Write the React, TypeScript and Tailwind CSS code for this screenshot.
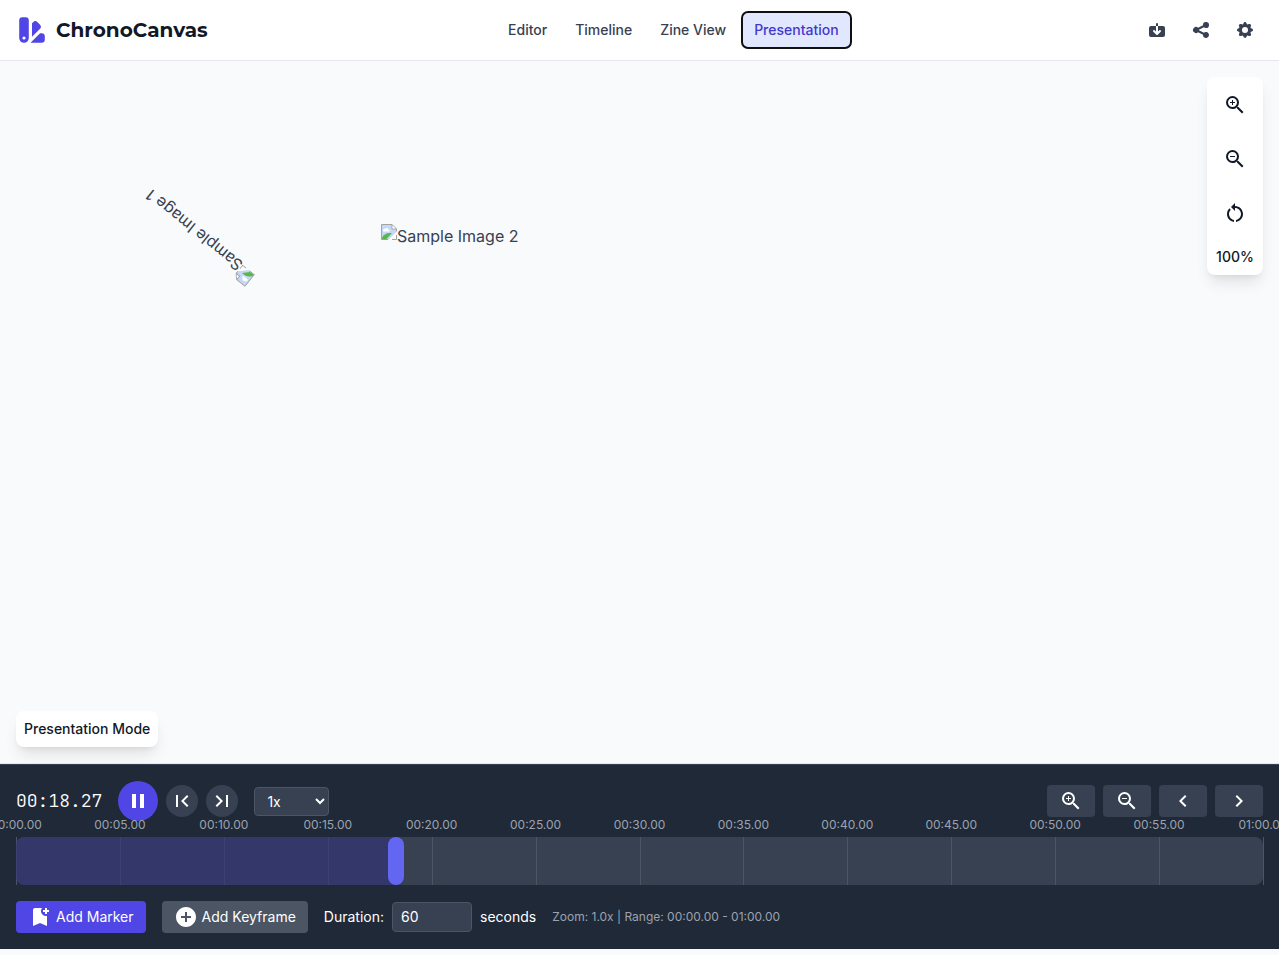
import { useId } from "react";
import type { ReactNode } from "react";
import { HiColorSwatch, HiSave, HiShare, HiCog } from "react-icons/hi";
import {
  MdAddCircle,
  MdBookmarkAdd,
  MdChevronLeft,
  MdChevronRight,
  MdFirstPage,
  MdLastPage,
  MdPause,
  MdRestartAlt,
  MdZoomIn,
  MdZoomOut,
} from "react-icons/md";

const DURATION = 60;
const CURRENT = 18.27;
const TICK_STEP = 5;

function formatTime(seconds: number) {
  const minutes = Math.floor(seconds / 60);
  const rest = (seconds % 60).toFixed(2).padStart(5, "0");
  return `${String(minutes).padStart(2, "0")}:${rest}`;
}

function NavButton({ children, active = false }: { children: ReactNode; active?: boolean }) {
  const state = active
    ? "bg-[#e0e7ff] text-[#4338ca] outline-2 -outline-offset-1 outline-[#101010]"
    : "text-[#374151]";
  return <button className={`rounded-md px-3 py-2 text-sm font-medium ${state}`}>{children}</button>;
}

function HeaderAction({ label, children }: { label: string; children: ReactNode }) {
  return (
    <button aria-label={label} className="rounded-md p-2 text-[#374151]">
      {children}
    </button>
  );
}

function PanelButton({ label, children }: { label: string; children: ReactNode }) {
  return (
    <button aria-label={label} className="rounded p-2">
      {children}
    </button>
  );
}

function StepButton({ label, children }: { label: string; children: ReactNode }) {
  return (
    <button aria-label={label} className="flex size-8 items-center justify-center rounded-full bg-[#374151]">
      {children}
    </button>
  );
}

function RangeButton({ label, children }: { label: string; children: ReactNode }) {
  return (
    <button aria-label={label} className="rounded bg-[#374151] px-3 py-1">
      {children}
    </button>
  );
}

function MissingImage({ alt }: { alt: string }) {
  return (
    <div className="flex whitespace-nowrap text-base text-[#374151]">
      <svg width="16" height="16" viewBox="0 0 16 16" aria-hidden="true">
        <path d="M.5.5h10.500l4.500 4.500V8L8 15.500H.5z" fill="#c6d7f8" />
        <path d="M2 6.500a1.600 1.600 0 0 1 1.800-1.600 2 2 0 0 1 3.700.6 1 1 0 0 1 .2 2H2.500z" fill="#fff" />
        <path d="M1 15v-1.500c2-3.500 5-5 10-4.500l-5.500 6z" fill="#5bb64a" />
        <path d="M16 7.500V10L10 16H7.500z" fill="#fff" />
        <path d="M7 15.500H.5V.5H11l4.500 4.500v2.500M11 .5V5h4.500M11 15.500h4.500V11" fill="none" stroke="#a3a3a3" />
        <path d="M11.500 1.500v3h3z" fill="#fff" />
      </svg>
      <span>{alt}</span>
    </div>
  );
}

function Header() {
  return (
    <header className="flex items-center justify-between border-b border-[#e5e7eb] bg-white px-4 py-3">
      <div className="flex items-center gap-2">
        <HiColorSwatch size={32} className="text-[#4f46e5]" />
        <h1 className="font-['Montserrat','Inter',sans-serif] text-xl font-bold text-[#111827]">ChronoCanvas</h1>
      </div>
      <nav className="flex gap-1">
        <NavButton>Editor</NavButton>
        <NavButton>Timeline</NavButton>
        <NavButton>Zine View</NavButton>
        <NavButton active>Presentation</NavButton>
      </nav>
      <div className="flex gap-2">
        <HeaderAction label="Save">
          <HiSave size={20} />
        </HeaderAction>
        <HeaderAction label="Share">
          <HiShare size={20} />
        </HeaderAction>
        <HeaderAction label="Settings">
          <HiCog size={20} />
        </HeaderAction>
      </div>
    </header>
  );
}

function Canvas() {
  return (
    <main className="relative flex-1 border-b border-[#e5e7eb]">
      <div className="absolute top-[226px] left-[245px] origin-top-left rotate-[219deg]">
        <MissingImage alt="Sample Image 1" />
      </div>
      <div className="absolute top-[163px] left-[381px]">
        <MissingImage alt="Sample Image 2" />
      </div>
      <div className="absolute top-4 right-4 flex flex-col items-center gap-3.5 rounded-lg bg-white p-2 shadow-lg">
        <PanelButton label="Zoom in">
          <MdZoomIn size={24} />
        </PanelButton>
        <PanelButton label="Zoom out">
          <MdZoomOut size={24} />
        </PanelButton>
        <PanelButton label="Reset zoom">
          <MdRestartAlt size={24} />
        </PanelButton>
        <span className="text-sm font-medium">100%</span>
      </div>
      <div className="absolute bottom-4 left-4 rounded-lg bg-white p-2 text-sm font-medium shadow-lg">
        Presentation Mode
      </div>
    </main>
  );
}

function Track() {
  const ticks = Array.from({ length: DURATION / TICK_STEP + 1 }, (_, i) => i * TICK_STEP);
  const progress = `${(CURRENT / DURATION) * 100}%`;
  return (
    <div className="relative mt-4 h-12 rounded-lg bg-[#374151]">
      {ticks.map((t) => (
        <div
          key={t}
          className="absolute top-0 h-full w-px bg-[#4b5563]"
          style={{ left: `${(t / DURATION) * 100}%` }}
        >
          <span className="absolute -top-5 left-0 -translate-x-1/2 text-xs text-[#9ca3af]">{formatTime(t)}</span>
        </div>
      ))}
      <div className="absolute top-0 left-0 h-full rounded-l-lg bg-[#312e81]/50" style={{ width: progress }} />
      <div className="absolute top-0 h-full w-4 -translate-x-1/2 rounded-full bg-[#6366f1]" style={{ left: progress }} />
    </div>
  );
}

function Timeline() {
  const durationId = useId();
  return (
    <footer className="border-t border-[#374151] bg-[#1f2937] p-4 text-white">
      <div className="flex items-center justify-between">
        <div className="flex items-center gap-4">
          <span className="font-['JetBrains_Mono','Liberation_Mono',monospace] text-lg font-light">
            {formatTime(CURRENT)}
          </span>
          <div className="flex items-center gap-2">
            <button
              aria-label="Pause"
              className="flex size-10 items-center justify-center rounded-full bg-[#4f46e5]"
            >
              <MdPause size={24} />
            </button>
            <StepButton label="Go to start">
              <MdFirstPage size={24} />
            </StepButton>
            <StepButton label="Go to end">
              <MdLastPage size={24} />
            </StepButton>
          </div>
          <select
            aria-label="Playback speed"
            defaultValue="1x"
            className="w-[75px] rounded border border-[#4b5563] bg-[#374151] px-2 py-1 text-sm"
          >
            <option>0.25x</option>
            <option>0.5x</option>
            <option>1x</option>
            <option>1.5x</option>
            <option>2x</option>
          </select>
        </div>
        <div className="flex gap-2">
          <RangeButton label="Zoom timeline in">
            <MdZoomIn size={24} />
          </RangeButton>
          <RangeButton label="Zoom timeline out">
            <MdZoomOut size={24} />
          </RangeButton>
          <RangeButton label="Scroll left">
            <MdChevronLeft size={24} />
          </RangeButton>
          <RangeButton label="Scroll right">
            <MdChevronRight size={24} />
          </RangeButton>
        </div>
      </div>
      <Track />
      <div className="mt-4 flex items-center gap-4 text-sm">
        <button className="flex items-center gap-1 rounded bg-[#4f46e5] px-3 py-1">
          <MdBookmarkAdd size={24} />
          Add Marker
        </button>
        <button className="flex items-center gap-1 rounded bg-[#4b5563] px-3 py-1">
          <MdAddCircle size={24} />
          Add Keyframe
        </button>
        <div className="flex items-center gap-2">
          <label htmlFor={durationId}>Duration:</label>
          <input
            id={durationId}
            type="number"
            defaultValue={DURATION}
            className="w-20 rounded border border-[#4b5563] bg-[#374151] px-2 py-1"
          />
          <span>seconds</span>
        </div>
        <span className="text-xs text-[#9ca3af]">
          Zoom: 1.0x | Range: {formatTime(0)} - {formatTime(DURATION)}
        </span>
      </div>
    </footer>
  );
}

export default function App() {
  return (
    <div className="flex h-screen flex-col overflow-hidden bg-[#f9fafb] pb-1.5 font-['Inter',sans-serif] text-[#111827]">
      <Header />
      <Canvas />
      <Timeline />
    </div>
  );
}
